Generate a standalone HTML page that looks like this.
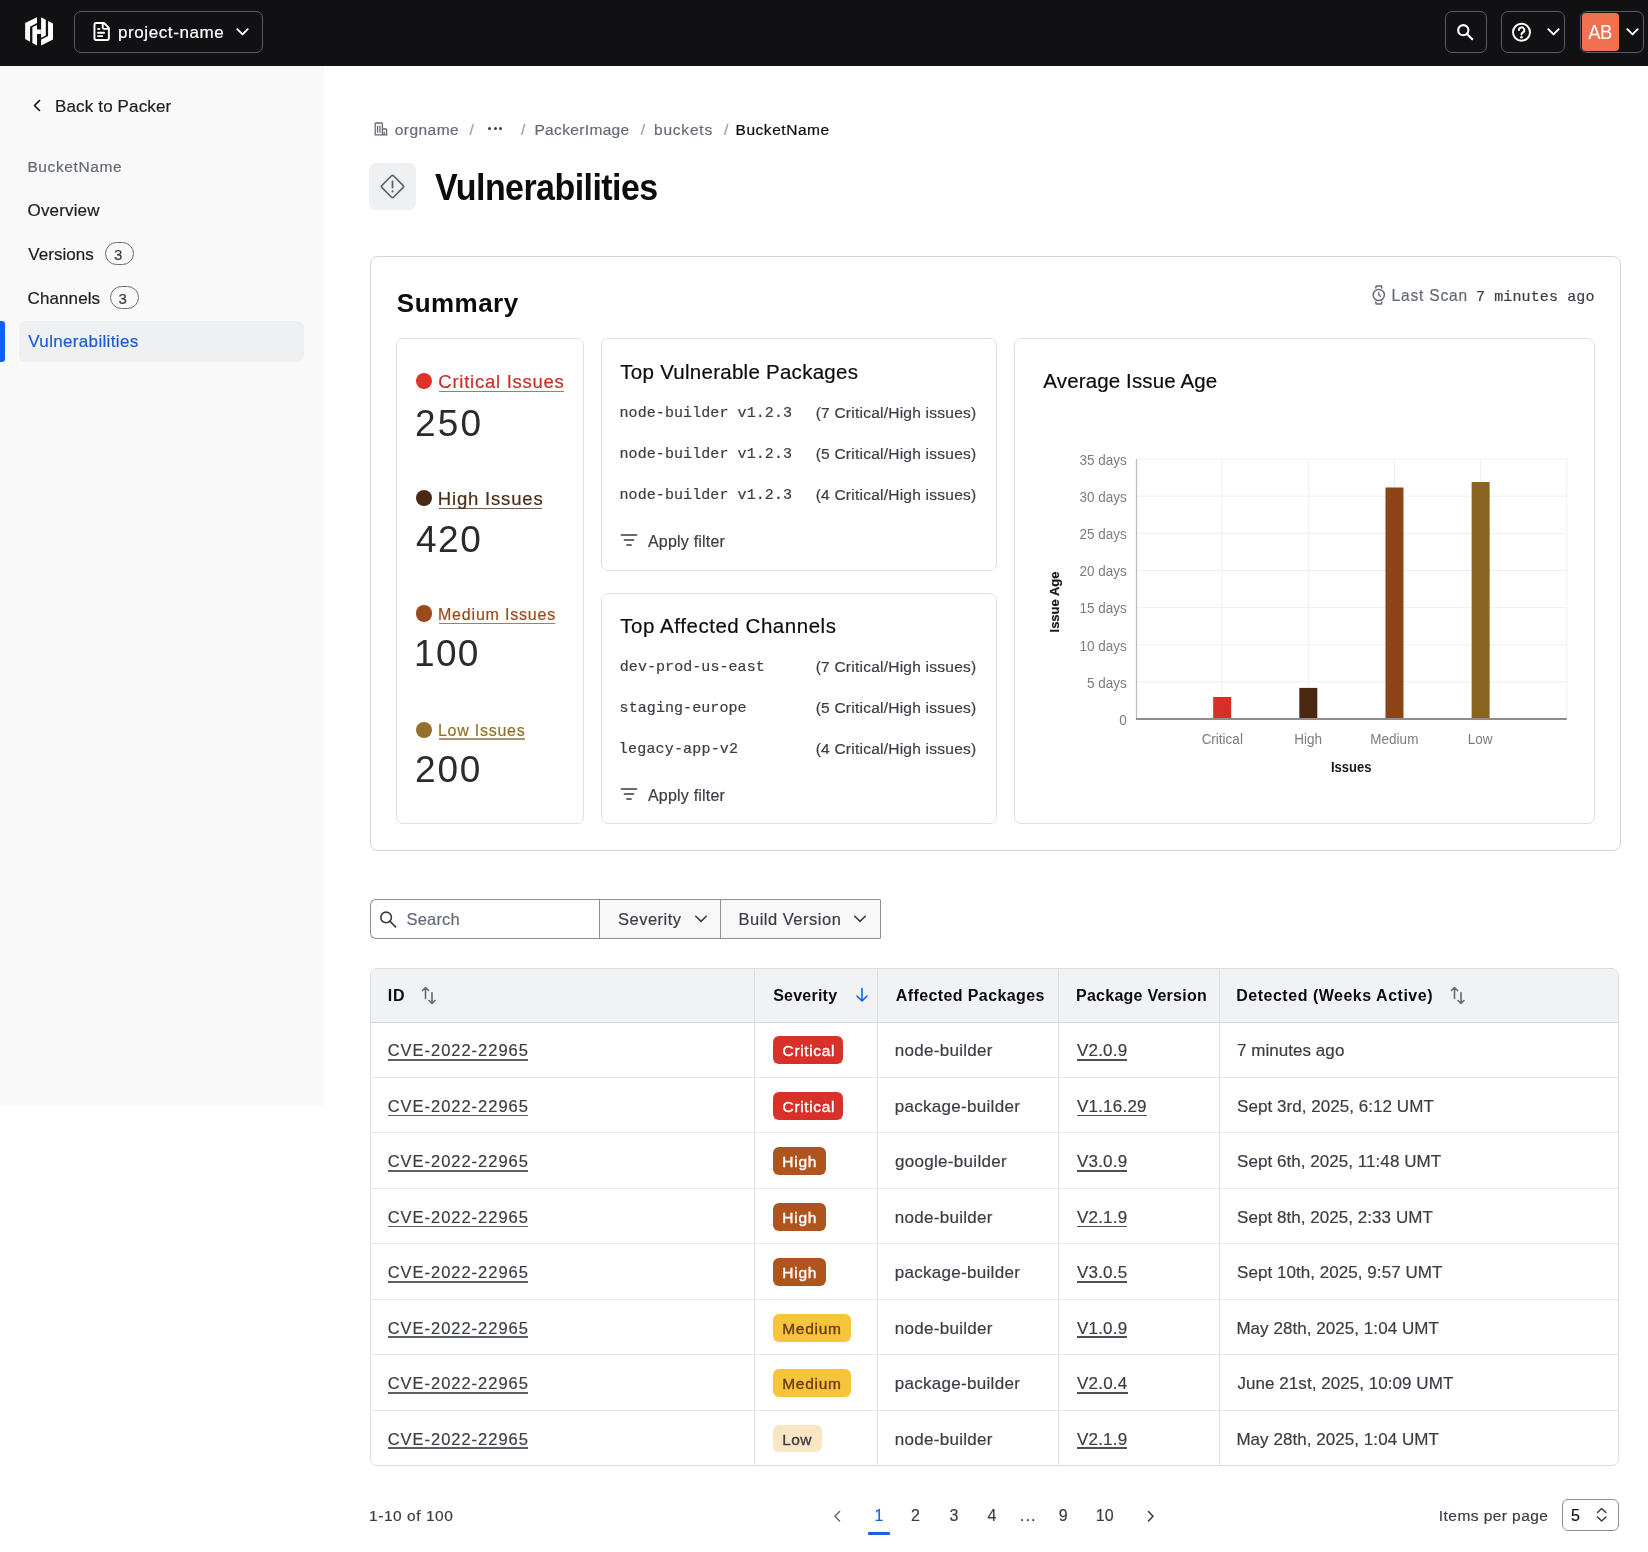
<!DOCTYPE html>
<html><head><meta charset="utf-8"><title>Vulnerabilities</title>
<style>
html,body{margin:0;padding:0;background:#fff;}
body{width:1648px;height:1552px;position:relative;overflow:hidden;font-family:"Liberation Sans",sans-serif;}
.t{position:absolute;line-height:1;white-space:nowrap;-webkit-text-stroke:0.2px currentColor;}
.r{position:absolute;display:block;}
#w{position:absolute;left:0;top:0;width:1648px;height:1552px;will-change:transform;}
</style></head><body><div id="w">
<div class="r" style="left:0.00px;top:0.00px;width:1648.00px;height:65.50px;background:#111113;"></div>
<svg class="r" style="left:20.00px;top:12.00px;width:40.00px;height:40.00px;" viewBox="0 0 1552 1552" fill="none"><path fill="#fff" d="M200 430 660 200V430L390 570V1150L200 1050z"/><path fill="#fff" d="M480 590 660 500V680H810V850H660V1300L480 1200z"/><path fill="#fff" d="M820 200 1000 300V910L820 1000z"/><path fill="#fff" d="M1280 1070 820 1300V1070L1090 930V350L1280 450z"/></svg>
<div class="r" style="left:74.00px;top:11.00px;width:189.00px;height:41.50px;border:1.5px solid #595b62;border-radius:7px;box-sizing:border-box;"></div>
<svg class="r" style="left:88.00px;top:18.00px;width:26.00px;height:26.00px;" viewBox="0 0 1552 1552" fill="none"><path stroke="#fff" stroke-width="115" stroke-linejoin="round" d="M485 300H955L1245 590V1210Q1245 1310 1145 1310H485Q385 1310 385 1210V400Q385 300 485 300z"/><path stroke="#fff" stroke-width="115" stroke-linecap="round" stroke-linejoin="round" d="M880 330V560Q880 650 970 650H1220M600 650H680M600 880H960M600 1080H850"/></svg>
<div class="t" style="left:117.90px;top:24.00px;font-size:17px;color:#fff;letter-spacing:0.604px;">project-name</div>
<svg class="r" style="left:235.00px;top:26.00px;width:15.00px;height:11.00px;" viewBox="0 0 15 11" fill="none"><path stroke="#fff" stroke-width="1.9" stroke-linecap="round" stroke-linejoin="round" d="M2.3 3.2l5.2 5.2 5.2-5.2"/></svg>
<div class="r" style="left:1445.00px;top:11.00px;width:41.50px;height:41.50px;border:1.5px solid #595b62;border-radius:7px;box-sizing:border-box;"></div>
<svg class="r" style="left:1456.00px;top:23.00px;width:19.00px;height:18.00px;" viewBox="0 0 19 18" fill="none"><circle cx="7.3" cy="7.2" r="5.1" stroke="#fff" stroke-width="2.1"/><path stroke="#fff" stroke-width="2.1" stroke-linecap="round" d="M11 10.9l5.3 5.3"/></svg>
<div class="r" style="left:1500.50px;top:11.00px;width:64.50px;height:41.50px;border:1.5px solid #595b62;border-radius:7px;box-sizing:border-box;"></div>
<svg class="r" style="left:1511.00px;top:21.50px;width:21.00px;height:20.50px;" viewBox="0 0 21 20.5" fill="none"><circle cx="10.5" cy="10.25" r="8.5" stroke="#fff" stroke-width="1.9"/><path stroke="#fff" stroke-width="2" stroke-linecap="round" d="M7.9 8.1a2.7 2.7 0 1 1 3.9 2.4c-.8.4-1.3 1-1.3 1.8v.3"/><circle cx="10.5" cy="15.2" r="1.25" fill="#fff"/></svg>
<svg class="r" style="left:1546.00px;top:26.00px;width:15.00px;height:11.00px;" viewBox="0 0 15 11" fill="none"><path stroke="#fff" stroke-width="1.9" stroke-linecap="round" stroke-linejoin="round" d="M2.3 3.2l5.2 5.2 5.2-5.2"/></svg>
<div class="r" style="left:1579.50px;top:11.00px;width:64.50px;height:41.50px;border:1.5px solid #595b62;border-radius:7px;box-sizing:border-box;"></div>
<div class="r" style="left:1581.50px;top:13.00px;width:37.00px;height:37.50px;background:#f0714f;border-radius:4px;"></div>
<div class="t" style="left:1588.36px;top:24.00px;font-size:18.5px;color:#fff;letter-spacing:-0.667px;transform-origin:0 15.00px;transform:scaleY(1.100);-webkit-text-stroke:0;">AB</div>
<svg class="r" style="left:1625.00px;top:26.00px;width:15.00px;height:11.00px;" viewBox="0 0 15 11" fill="none"><path stroke="#fff" stroke-width="1.9" stroke-linecap="round" stroke-linejoin="round" d="M2.3 3.2l5.2 5.2 5.2-5.2"/></svg>
<div class="r" style="left:0.00px;top:65.50px;width:323.50px;height:1039.80px;background:#f9f9fa;"></div>
<svg class="r" style="left:32.00px;top:99.00px;width:10.00px;height:13.00px;" viewBox="0 0 10 13" fill="none"><path stroke="#0c0c0e" stroke-width="1.6" stroke-linecap="round" stroke-linejoin="round" d="M7.5 1.5 2.5 6.5l5 5"/></svg>
<div class="t" style="left:55.01px;top:98.30px;font-size:17px;color:#1d1e22;letter-spacing:0.150px;">Back to Packer</div>
<div class="t" style="left:27.43px;top:158.80px;font-size:15.5px;color:#656a76;letter-spacing:0.614px;">BucketName</div>
<div class="t" style="left:27.59px;top:202.00px;font-size:17px;color:#1d1e22;letter-spacing:0.145px;">Overview</div>
<div class="t" style="left:28.33px;top:246.10px;font-size:17px;color:#1d1e22;letter-spacing:0.035px;">Versions</div>
<div class="r" style="left:105.10px;top:242.00px;width:28.70px;height:22.70px;border:1px solid #6b6e76;border-radius:12px;box-sizing:border-box;"></div>
<div class="t c3" style="left:113.93px;top:247.10px;font-size:15px;color:#3b3d45;">3</div>
<div class="t" style="left:27.54px;top:289.60px;font-size:17px;color:#1d1e22;letter-spacing:0.107px;">Channels</div>
<div class="r" style="left:109.70px;top:286.00px;width:28.90px;height:22.60px;border:1px solid #6b6e76;border-radius:12px;box-sizing:border-box;"></div>
<div class="t c3" style="left:118.53px;top:290.60px;font-size:15px;color:#3b3d45;">3</div>
<div class="r" style="left:19.00px;top:320.80px;width:285.00px;height:41.00px;background:#eff0f2;border-radius:6px;"></div>
<div class="r" style="left:0.00px;top:320.60px;width:4.70px;height:41.40px;background:#1060ff;border-radius:0 3px 3px 0;"></div>
<div class="t" style="left:28.33px;top:333.30px;font-size:17px;color:#1b5cd6;letter-spacing:0.332px;">Vulnerabilities</div>
<svg class="r" style="left:374.00px;top:122.00px;width:14.00px;height:13.50px;" viewBox="0 0 14 13.5" fill="none"><path stroke="#656a76" stroke-width="1.3" stroke-linejoin="round" d="M1.2 12.8V1.8a.8.8 0 0 1 .8-.8h5.6a.8.8 0 0 1 .8.8v11M8.4 7h3.4a.8.8 0 0 1 .8.8v5M.5 12.8h13M3.6 3.8v7M6 3.8v7M10.2 9.5v3"/></svg>
<div class="t" style="left:394.75px;top:121.90px;font-size:15.5px;color:#656a76;letter-spacing:0.461px;">orgname</div>
<div class="t" style="left:469.50px;top:121.90px;font-size:15.5px;color:#9a9ea8;">/</div>
<div class="t" style="left:521.00px;top:121.90px;font-size:15.5px;color:#9a9ea8;">/</div>
<div class="r" style="left:488.30px;top:126.90px;width:3.20px;height:3.20px;background:#3b3d45;border-radius:50%;"></div>
<div class="r" style="left:493.60px;top:126.90px;width:3.20px;height:3.20px;background:#3b3d45;border-radius:50%;"></div>
<div class="r" style="left:498.90px;top:126.90px;width:3.20px;height:3.20px;background:#3b3d45;border-radius:50%;"></div>
<div class="t" style="left:534.43px;top:121.90px;font-size:15.5px;color:#656a76;letter-spacing:0.344px;">PackerImage</div>
<div class="t" style="left:640.80px;top:121.90px;font-size:15.5px;color:#9a9ea8;">/</div>
<div class="t" style="left:654.00px;top:121.90px;font-size:15.5px;color:#656a76;letter-spacing:0.790px;">buckets</div>
<div class="t" style="left:724.00px;top:121.90px;font-size:15.5px;color:#9a9ea8;">/</div>
<div class="t" style="left:735.53px;top:121.90px;font-size:15.5px;color:#0c0c0e;letter-spacing:0.548px;">BucketName</div>
<div class="r" style="left:369.40px;top:163.30px;width:46.60px;height:46.30px;background:#eff0f2;border-radius:7px;"></div>
<svg class="r" style="left:379.00px;top:172.50px;width:27.00px;height:27.00px;" viewBox="0 0 27 27" fill="none"><path stroke="#5f636b" stroke-width="1.7" stroke-linejoin="round" d="M12.3 3 Q13.5 1.8 14.7 3L24 12.3Q25.2 13.5 24 14.7L14.7 24Q13.5 25.2 12.3 24L3 14.7Q1.8 13.5 3 12.3z"/><path stroke="#5f636b" stroke-width="1.8" stroke-linecap="round" d="M13.5 8.5v6"/><circle cx="13.5" cy="18.4" r="1.1" fill="#5f636b"/></svg>
<div class="t" style="left:434.97px;top:170.80px;font-size:34px;color:#0c0c0e;font-weight:700;-webkit-text-stroke:0;letter-spacing:-0.570px;transform-origin:0 29.00px;transform:scaleY(1.070);">Vulnerabilities</div>
<div class="r" style="left:369.90px;top:256.10px;width:1251.10px;height:595.10px;border:1px solid #d3d4d8;border-radius:8px;box-sizing:border-box;"></div>
<div class="t" style="left:396.85px;top:289.80px;font-size:26px;color:#0c0c0e;font-weight:700;-webkit-text-stroke:0;letter-spacing:0.465px;">Summary</div>
<svg class="r" style="left:1370.50px;top:285.00px;width:15.50px;height:20.00px;" viewBox="0 0 15.5 20" fill="none"><path stroke="#656a76" stroke-width="1.5" d="M4.5 3.4 5.3 1h5l.8 2.4M4.5 16.6l.8 2.4h5l.8-2.4"/><circle cx="7.8" cy="10" r="5.6" stroke="#656a76" stroke-width="1.5"/><path stroke="#656a76" stroke-width="1.4" stroke-linecap="round" d="M7.8 7.4V10l1.6 1.3"/></svg>
<div class="t" style="left:1391.53px;top:288.40px;font-size:15.5px;color:#656a76;letter-spacing:0.843px;transform-origin:0 13.00px;transform:scaleY(1.120);">Last Scan</div>
<div class="t" style="left:1475.94px;top:289.80px;font-size:15px;color:#3b3d45;font-family:'Liberation Mono', monospace;letter-spacing:0.125px;">7 minutes ago</div>
<div class="r" style="left:396.40px;top:338.10px;width:187.40px;height:486.40px;border:1px solid #dedfe2;border-radius:7px;box-sizing:border-box;"></div>
<div class="r" style="left:415.50px;top:373.20px;width:16.20px;height:16.20px;background:#e0312a;border-radius:50%;"></div>
<div class="t" style="left:438.36px;top:373.20px;font-size:18.5px;color:#c9302a;letter-spacing:0.734px;">Critical Issues</div>
<div class="r" style="left:439.30px;top:390.80px;width:124.30px;height:1.40px;background:#c9302a;opacity:.75;"></div>
<div class="t" style="left:414.94px;top:405.30px;font-size:37px;color:#2b2b2b;letter-spacing:2.237px;-webkit-text-stroke:0;">250</div>
<div class="r" style="left:415.50px;top:489.90px;width:16.20px;height:16.20px;background:#4a2812;border-radius:50%;"></div>
<div class="t" style="left:437.78px;top:489.90px;font-size:18.5px;color:#4d2c18;letter-spacing:0.823px;">High Issues</div>
<div class="r" style="left:439.30px;top:507.50px;width:103.20px;height:1.40px;background:#4d2c18;opacity:.75;"></div>
<div class="t" style="left:415.95px;top:521.30px;font-size:37px;color:#2b2b2b;letter-spacing:1.531px;-webkit-text-stroke:0;">420</div>
<div class="r" style="left:415.50px;top:605.40px;width:16.20px;height:16.20px;background:#9a4a1c;border-radius:50%;"></div>
<div class="t" style="left:437.99px;top:607.20px;font-size:16px;color:#9a4a1c;letter-spacing:0.808px;">Medium Issues</div>
<div class="r" style="left:439.30px;top:622.80px;width:115.90px;height:1.40px;background:#9a4a1c;opacity:.75;"></div>
<div class="t" style="left:413.98px;top:634.80px;font-size:37px;color:#2b2b2b;letter-spacing:1.365px;-webkit-text-stroke:0;">100</div>
<div class="r" style="left:415.50px;top:721.90px;width:16.20px;height:16.20px;background:#94702a;border-radius:50%;"></div>
<div class="t" style="left:437.99px;top:722.80px;font-size:16px;color:#94702a;letter-spacing:0.739px;">Low Issues</div>
<div class="r" style="left:439.30px;top:738.40px;width:85.30px;height:1.40px;background:#94702a;opacity:.75;"></div>
<div class="t" style="left:414.94px;top:750.80px;font-size:37px;color:#2b2b2b;letter-spacing:1.887px;-webkit-text-stroke:0;">200</div>
<div class="r" style="left:600.50px;top:338.00px;width:396.50px;height:233.00px;border:1px solid #dedfe2;border-radius:7px;box-sizing:border-box;"></div>
<div class="t" style="left:620.34px;top:361.60px;font-size:20.5px;color:#0c0c0e;letter-spacing:0.266px;">Top Vulnerable Packages</div>
<div class="t" style="left:619.49px;top:406.00px;font-size:15px;color:#3b3d45;font-family:'Liberation Mono', monospace;letter-spacing:0.085px;">node-builder v1.2.3</div>
<div class="t" style="left:815.64px;top:405.20px;font-size:15.5px;color:#3b3d45;letter-spacing:0.238px;">(7 Critical/High issues)</div>
<div class="t" style="left:619.49px;top:447.20px;font-size:15px;color:#3b3d45;font-family:'Liberation Mono', monospace;letter-spacing:0.085px;">node-builder v1.2.3</div>
<div class="t" style="left:815.64px;top:446.40px;font-size:15.5px;color:#3b3d45;letter-spacing:0.238px;">(5 Critical/High issues)</div>
<div class="t" style="left:619.49px;top:488.00px;font-size:15px;color:#3b3d45;font-family:'Liberation Mono', monospace;letter-spacing:0.085px;">node-builder v1.2.3</div>
<div class="t" style="left:815.64px;top:487.20px;font-size:15.5px;color:#3b3d45;letter-spacing:0.238px;">(4 Critical/High issues)</div>
<svg class="r" style="left:620.00px;top:532.50px;width:18.00px;height:14.00px;" viewBox="0 0 18 14" fill="none"><path stroke="#3b3d45" stroke-width="1.7" stroke-linecap="round" d="M1.5 2h15M4.5 7h9M7 12h4"/></svg>
<div class="t" style="left:647.97px;top:534.20px;font-size:16px;color:#3b3d45;letter-spacing:0.200px;">Apply filter</div>
<div class="r" style="left:600.50px;top:592.60px;width:396.50px;height:231.90px;border:1px solid #dedfe2;border-radius:7px;box-sizing:border-box;"></div>
<div class="t" style="left:620.34px;top:615.60px;font-size:20.5px;color:#0c0c0e;letter-spacing:0.543px;">Top Affected Channels</div>
<div class="t" style="left:619.79px;top:660.00px;font-size:15px;color:#3b3d45;font-family:'Liberation Mono', monospace;letter-spacing:0.063px;">dev-prod-us-east</div>
<div class="t" style="left:815.64px;top:659.20px;font-size:15.5px;color:#3b3d45;letter-spacing:0.238px;">(7 Critical/High issues)</div>
<div class="t" style="left:619.58px;top:701.20px;font-size:15px;color:#3b3d45;font-family:'Liberation Mono', monospace;letter-spacing:0.076px;">staging-europe</div>
<div class="t" style="left:815.64px;top:700.40px;font-size:15.5px;color:#3b3d45;letter-spacing:0.238px;">(5 Critical/High issues)</div>
<div class="t" style="left:618.84px;top:742.00px;font-size:15px;color:#3b3d45;font-family:'Liberation Mono', monospace;letter-spacing:0.183px;">legacy-app-v2</div>
<div class="t" style="left:815.64px;top:741.20px;font-size:15.5px;color:#3b3d45;letter-spacing:0.238px;">(4 Critical/High issues)</div>
<svg class="r" style="left:620.00px;top:786.50px;width:18.00px;height:14.00px;" viewBox="0 0 18 14" fill="none"><path stroke="#3b3d45" stroke-width="1.7" stroke-linecap="round" d="M1.5 2h15M4.5 7h9M7 12h4"/></svg>
<div class="t" style="left:647.97px;top:788.20px;font-size:16px;color:#3b3d45;letter-spacing:0.200px;">Apply filter</div>
<div class="r" style="left:1014.20px;top:338.20px;width:580.60px;height:486.00px;border:1px solid #dedfe2;border-radius:7px;box-sizing:border-box;"></div>
<div class="t" style="left:1043.36px;top:370.80px;font-size:20.5px;color:#0c0c0e;letter-spacing:0.133px;">Average Issue Age</div>
<svg class="r" style="left:1136.00px;top:459.20px;width:430.80px;height:261.10px;overflow:visible" viewBox="0 0 430.80 261.10"><line x1="0" x2="430.80" y1="260.10" y2="260.10" stroke="#efefef" stroke-width="1"/><line x1="0" x2="430.80" y1="222.94" y2="222.94" stroke="#efefef" stroke-width="1"/><line x1="0" x2="430.80" y1="185.79" y2="185.79" stroke="#efefef" stroke-width="1"/><line x1="0" x2="430.80" y1="148.63" y2="148.63" stroke="#efefef" stroke-width="1"/><line x1="0" x2="430.80" y1="111.47" y2="111.47" stroke="#efefef" stroke-width="1"/><line x1="0" x2="430.80" y1="74.31" y2="74.31" stroke="#efefef" stroke-width="1"/><line x1="0" x2="430.80" y1="37.16" y2="37.16" stroke="#efefef" stroke-width="1"/><line x1="0" x2="430.80" y1="0.00" y2="0.00" stroke="#efefef" stroke-width="1"/><line y1="0" y2="260.10" x1="86.16" x2="86.16" stroke="#efefef" stroke-width="1"/><line y1="0" y2="260.10" x1="172.32" x2="172.32" stroke="#efefef" stroke-width="1"/><line y1="0" y2="260.10" x1="258.48" x2="258.48" stroke="#efefef" stroke-width="1"/><line y1="0" y2="260.10" x1="344.64" x2="344.64" stroke="#efefef" stroke-width="1"/><line y1="0" y2="260.10" x1="430.80" x2="430.80" stroke="#efefef" stroke-width="1"/><rect x="77.16" y="238.00" width="18" height="22.10" fill="#da2f29"/><rect x="163.32" y="228.90" width="18" height="31.20" fill="#4b2611"/><rect x="249.48" y="28.50" width="18" height="231.60" fill="#8c4418"/><rect x="335.64" y="23.00" width="18" height="237.10" fill="#8a6420"/><line x1="0.5" x2="0.5" y1="0" y2="260.10" stroke="#bdbdbd" stroke-width="1.3"/><line x1="0" x2="430.80" y1="260.10" y2="260.10" stroke="#8d8d8d" stroke-width="2"/></svg>
<div class="t" style="left:1119.32px;top:713.90px;font-size:13.5px;color:#7c7c7c;transform-origin:0 11.00px;transform:scaleY(1.100);-webkit-text-stroke:0;">0</div>
<div class="t" style="left:1087.01px;top:676.74px;font-size:13.5px;color:#7c7c7c;transform-origin:0 11.00px;transform:scaleY(1.100);-webkit-text-stroke:0;">5 days</div>
<div class="t" style="left:1079.50px;top:639.59px;font-size:13.5px;color:#7c7c7c;transform-origin:0 11.00px;transform:scaleY(1.100);-webkit-text-stroke:0;">10 days</div>
<div class="t" style="left:1079.50px;top:602.43px;font-size:13.5px;color:#7c7c7c;transform-origin:0 11.00px;transform:scaleY(1.100);-webkit-text-stroke:0;">15 days</div>
<div class="t" style="left:1079.50px;top:565.27px;font-size:13.5px;color:#7c7c7c;transform-origin:0 11.00px;transform:scaleY(1.100);-webkit-text-stroke:0;">20 days</div>
<div class="t" style="left:1079.50px;top:528.11px;font-size:13.5px;color:#7c7c7c;transform-origin:0 11.00px;transform:scaleY(1.100);-webkit-text-stroke:0;">25 days</div>
<div class="t" style="left:1079.50px;top:490.96px;font-size:13.5px;color:#7c7c7c;transform-origin:0 11.00px;transform:scaleY(1.100);-webkit-text-stroke:0;">30 days</div>
<div class="t" style="left:1079.50px;top:453.80px;font-size:13.5px;color:#7c7c7c;transform-origin:0 11.00px;transform:scaleY(1.100);-webkit-text-stroke:0;">35 days</div>
<div class="t" style="left:1201.64px;top:733.00px;font-size:13.5px;color:#7c7c7c;transform-origin:0 11.00px;transform:scaleY(1.100);-webkit-text-stroke:0;">Critical</div>
<div class="t" style="left:1294.32px;top:733.00px;font-size:13.5px;color:#7c7c7c;transform-origin:0 11.00px;transform:scaleY(1.100);-webkit-text-stroke:0;">High</div>
<div class="t" style="left:1370.36px;top:733.00px;font-size:13.5px;color:#7c7c7c;transform-origin:0 11.00px;transform:scaleY(1.100);-webkit-text-stroke:0;">Medium</div>
<div class="t" style="left:1467.69px;top:733.00px;font-size:13.5px;color:#7c7c7c;transform-origin:0 11.00px;transform:scaleY(1.100);-webkit-text-stroke:0;">Low</div>
<div class="t" style="left:1330.90px;top:761.20px;font-size:13px;color:#161616;font-weight:700;-webkit-text-stroke:0;transform-origin:0 11.00px;transform:scaleY(1.100);">Issues</div>
<div class="t" style="left:1053.6px;top:602.4px;font-size:13px;font-weight:700;color:#161616;transform:translate(-50%,-50%) rotate(-90deg);">Issue Age</div>
<div class="r" style="left:369.80px;top:898.50px;width:230.20px;height:40.80px;border:1px solid #8c8f98;border-right:none;border-radius:6px 0 0 6px;box-sizing:border-box;background:#fff;"></div>
<svg class="r" style="left:378.50px;top:910.50px;width:19.00px;height:17.50px;" viewBox="0 0 19 17.5" fill="none"><circle cx="7.1" cy="6.4" r="5.3" stroke="#3b3d45" stroke-width="1.6"/><path stroke="#3b3d45" stroke-width="1.7" stroke-linecap="round" d="M11 10.3l5.6 5.6"/></svg>
<div class="t" style="left:406.55px;top:911.00px;font-size:16.5px;color:#656a76;letter-spacing:0.168px;">Search</div>
<div class="r" style="left:599.30px;top:898.50px;width:121.70px;height:40.80px;border:1px solid #8c8f98;box-sizing:border-box;background:#f8f8f9;"></div>
<div class="t" style="left:618.05px;top:910.70px;font-size:16.5px;color:#3b3d45;letter-spacing:0.483px;">Severity</div>
<svg class="r" style="left:693.50px;top:913.00px;width:14.00px;height:12.00px;" viewBox="0 0 14 12" fill="none"><path stroke="#3b3d45" stroke-width="1.6" stroke-linecap="round" stroke-linejoin="round" d="M1.8 3.2 7 8.4l5.2-5.2"/></svg>
<div class="r" style="left:720.00px;top:898.50px;width:160.60px;height:40.80px;border:1px solid #8c8f98;box-sizing:border-box;background:#f8f8f9;border-radius:0 1px 1px 0;"></div>
<div class="t" style="left:738.45px;top:910.70px;font-size:16.5px;color:#3b3d45;letter-spacing:0.509px;">Build Version</div>
<svg class="r" style="left:853.00px;top:913.00px;width:14.00px;height:12.00px;" viewBox="0 0 14 12" fill="none"><path stroke="#3b3d45" stroke-width="1.6" stroke-linecap="round" stroke-linejoin="round" d="M1.8 3.2 7 8.4l5.2-5.2"/></svg>
<div class="r" style="left:369.80px;top:967.70px;width:1249.20px;height:498.60px;border:1px solid #dcdde0;border-radius:7px;box-sizing:border-box;overflow:hidden;"></div>
<div class="r" style="left:370.80px;top:968.70px;width:1247.20px;height:53.00px;background:#f1f2f3;border-radius:6px 6px 0 0;"></div>
<div class="r" style="left:369.80px;top:1021.70px;width:1249.20px;height:1.20px;background:#d5d6da;"></div>
<div class="r" style="left:369.80px;top:1076.90px;width:1249.20px;height:1.00px;background:#e6e7ea;"></div>
<div class="r" style="left:369.80px;top:1132.40px;width:1249.20px;height:1.00px;background:#e6e7ea;"></div>
<div class="r" style="left:369.80px;top:1187.90px;width:1249.20px;height:1.00px;background:#e6e7ea;"></div>
<div class="r" style="left:369.80px;top:1243.30px;width:1249.20px;height:1.00px;background:#e6e7ea;"></div>
<div class="r" style="left:369.80px;top:1298.80px;width:1249.20px;height:1.00px;background:#e6e7ea;"></div>
<div class="r" style="left:369.80px;top:1354.30px;width:1249.20px;height:1.00px;background:#e6e7ea;"></div>
<div class="r" style="left:369.80px;top:1409.80px;width:1249.20px;height:1.00px;background:#e6e7ea;"></div>
<div class="r" style="left:754.40px;top:968.20px;width:1.10px;height:497.30px;background:#dfe0e3;"></div>
<div class="r" style="left:877.10px;top:968.20px;width:1.10px;height:497.30px;background:#dfe0e3;"></div>
<div class="r" style="left:1057.80px;top:968.20px;width:1.10px;height:497.30px;background:#dfe0e3;"></div>
<div class="r" style="left:1218.50px;top:968.20px;width:1.10px;height:497.30px;background:#dfe0e3;"></div>
<div class="t" style="left:387.73px;top:988.30px;font-size:16px;color:#0c0c0e;font-weight:700;-webkit-text-stroke:0;letter-spacing:0.942px;">ID</div>
<svg class="r" style="left:420.00px;top:985.50px;width:17.00px;height:19.00px;" viewBox="0 0 15 19" fill="none"><path stroke="#656a76" stroke-width="1.6" stroke-linecap="round" stroke-linejoin="round" d="M4.5 12.5V1.5M1.5 4.5l3-3 3 3M11 6.5v11M8 14.5l3 3 3-3"/></svg>
<div class="t" style="left:773.14px;top:988.30px;font-size:16px;color:#0c0c0e;font-weight:700;-webkit-text-stroke:0;letter-spacing:0.240px;">Severity</div>
<svg class="r" style="left:854.50px;top:987.00px;width:14.00px;height:16.00px;" viewBox="0 0 14 16" fill="none"><path stroke="#1060ff" stroke-width="1.6" stroke-linecap="round" stroke-linejoin="round" d="M7 1.5v12.5M2 9l5 5 5-5"/></svg>
<div class="t" style="left:895.80px;top:988.30px;font-size:16px;color:#0c0c0e;font-weight:700;-webkit-text-stroke:0;letter-spacing:0.392px;">Affected Packages</div>
<div class="t" style="left:1076.03px;top:988.30px;font-size:16px;color:#0c0c0e;font-weight:700;-webkit-text-stroke:0;letter-spacing:0.249px;">Package Version</div>
<div class="t" style="left:1236.23px;top:988.30px;font-size:16px;color:#0c0c0e;font-weight:700;-webkit-text-stroke:0;letter-spacing:0.515px;">Detected (Weeks Active)</div>
<svg class="r" style="left:1449.00px;top:985.50px;width:17.00px;height:19.00px;" viewBox="0 0 15 19" fill="none"><path stroke="#656a76" stroke-width="1.6" stroke-linecap="round" stroke-linejoin="round" d="M4.5 12.5V1.5M1.5 4.5l3-3 3 3M11 6.5v11M8 14.5l3 3 3-3"/></svg>
<div class="t" style="left:387.66px;top:1042.35px;font-size:16.5px;color:#3b3d45;letter-spacing:0.979px;">CVE-2022-22965</div>
<div class="r" style="left:388.30px;top:1058.95px;width:139.30px;height:1.60px;background:#5d6068;"></div>
<div class="r" style="left:773.20px;top:1036.35px;width:70.00px;height:27.70px;background:#d8312a;border-radius:6px;"></div>
<div class="t" style="left:782.61px;top:1043.35px;font-size:15.5px;color:#fff;letter-spacing:0.630px;-webkit-text-stroke:0.35px #fff;">Critical</div>
<div class="t" style="left:894.67px;top:1042.35px;font-size:17px;color:#3b3d45;letter-spacing:0.299px;">node-builder</div>
<div class="t" style="left:1076.93px;top:1042.35px;font-size:17px;color:#3b3d45;letter-spacing:0.227px;">V2.0.9</div>
<div class="r" style="left:1077.00px;top:1058.95px;width:50.20px;height:1.60px;background:#4d5058;"></div>
<div class="t" style="left:1236.93px;top:1042.35px;font-size:17px;color:#3b3d45;letter-spacing:0.052px;">7 minutes ago</div>
<div class="t" style="left:387.66px;top:1097.95px;font-size:16.5px;color:#3b3d45;letter-spacing:0.979px;">CVE-2022-22965</div>
<div class="r" style="left:388.30px;top:1114.55px;width:139.30px;height:1.60px;background:#5d6068;"></div>
<div class="r" style="left:773.20px;top:1091.95px;width:70.00px;height:27.70px;background:#d8312a;border-radius:6px;"></div>
<div class="t" style="left:782.61px;top:1098.95px;font-size:15.5px;color:#fff;letter-spacing:0.630px;-webkit-text-stroke:0.35px #fff;">Critical</div>
<div class="t" style="left:894.70px;top:1097.95px;font-size:17px;color:#3b3d45;letter-spacing:0.301px;">package-builder</div>
<div class="t" style="left:1076.93px;top:1097.95px;font-size:17px;color:#3b3d45;letter-spacing:0.226px;">V1.16.29</div>
<div class="r" style="left:1077.00px;top:1114.55px;width:69.56px;height:1.60px;background:#4d5058;"></div>
<div class="t" style="left:1237.03px;top:1097.95px;font-size:17px;color:#3b3d45;letter-spacing:0.050px;">Sept 3rd, 2025, 6:12 UMT</div>
<div class="t" style="left:387.66px;top:1153.45px;font-size:16.5px;color:#3b3d45;letter-spacing:0.979px;">CVE-2022-22965</div>
<div class="r" style="left:388.30px;top:1170.05px;width:139.30px;height:1.60px;background:#5d6068;"></div>
<div class="r" style="left:773.20px;top:1147.45px;width:53.30px;height:27.70px;background:#b0541d;border-radius:6px;"></div>
<div class="t" style="left:782.13px;top:1154.45px;font-size:15.5px;color:#fff;letter-spacing:0.828px;-webkit-text-stroke:0.35px #fff;">High</div>
<div class="t" style="left:895.09px;top:1153.45px;font-size:17px;color:#3b3d45;letter-spacing:0.290px;">google-builder</div>
<div class="t" style="left:1076.93px;top:1153.45px;font-size:17px;color:#3b3d45;letter-spacing:0.227px;">V3.0.9</div>
<div class="r" style="left:1077.00px;top:1170.05px;width:50.20px;height:1.60px;background:#4d5058;"></div>
<div class="t" style="left:1237.03px;top:1153.45px;font-size:17px;color:#3b3d45;letter-spacing:0.050px;">Sept 6th, 2025, 11:48 UMT</div>
<div class="t" style="left:387.66px;top:1208.90px;font-size:16.5px;color:#3b3d45;letter-spacing:0.979px;">CVE-2022-22965</div>
<div class="r" style="left:388.30px;top:1225.50px;width:139.30px;height:1.60px;background:#5d6068;"></div>
<div class="r" style="left:773.20px;top:1202.90px;width:53.30px;height:27.70px;background:#b0541d;border-radius:6px;"></div>
<div class="t" style="left:782.13px;top:1209.90px;font-size:15.5px;color:#fff;letter-spacing:0.828px;-webkit-text-stroke:0.35px #fff;">High</div>
<div class="t" style="left:894.67px;top:1208.90px;font-size:17px;color:#3b3d45;letter-spacing:0.299px;">node-builder</div>
<div class="t" style="left:1076.93px;top:1208.90px;font-size:17px;color:#3b3d45;letter-spacing:0.227px;">V2.1.9</div>
<div class="r" style="left:1077.00px;top:1225.50px;width:50.20px;height:1.60px;background:#4d5058;"></div>
<div class="t" style="left:1237.03px;top:1208.90px;font-size:17px;color:#3b3d45;letter-spacing:0.049px;">Sept 8th, 2025, 2:33 UMT</div>
<div class="t" style="left:387.66px;top:1264.35px;font-size:16.5px;color:#3b3d45;letter-spacing:0.979px;">CVE-2022-22965</div>
<div class="r" style="left:388.30px;top:1280.95px;width:139.30px;height:1.60px;background:#5d6068;"></div>
<div class="r" style="left:773.20px;top:1258.35px;width:53.30px;height:27.70px;background:#b0541d;border-radius:6px;"></div>
<div class="t" style="left:782.13px;top:1265.35px;font-size:15.5px;color:#fff;letter-spacing:0.828px;-webkit-text-stroke:0.35px #fff;">High</div>
<div class="t" style="left:894.70px;top:1264.35px;font-size:17px;color:#3b3d45;letter-spacing:0.301px;">package-builder</div>
<div class="t" style="left:1076.93px;top:1264.35px;font-size:17px;color:#3b3d45;letter-spacing:0.228px;">V3.0.5</div>
<div class="r" style="left:1077.00px;top:1280.95px;width:50.30px;height:1.60px;background:#4d5058;"></div>
<div class="t" style="left:1237.03px;top:1264.35px;font-size:17px;color:#3b3d45;letter-spacing:0.050px;">Sept 10th, 2025, 9:57 UMT</div>
<div class="t" style="left:387.66px;top:1319.85px;font-size:16.5px;color:#3b3d45;letter-spacing:0.979px;">CVE-2022-22965</div>
<div class="r" style="left:388.30px;top:1336.45px;width:139.30px;height:1.60px;background:#5d6068;"></div>
<div class="r" style="left:773.20px;top:1313.85px;width:77.50px;height:27.70px;background:#f7c53b;border-radius:6px;"></div>
<div class="t" style="left:782.13px;top:1320.85px;font-size:15.5px;color:#6a3b0a;letter-spacing:0.750px;-webkit-text-stroke:0.35px #6a3b0a;">Medium</div>
<div class="t" style="left:894.67px;top:1319.85px;font-size:17px;color:#3b3d45;letter-spacing:0.299px;">node-builder</div>
<div class="t" style="left:1076.93px;top:1319.85px;font-size:17px;color:#3b3d45;letter-spacing:0.227px;">V1.0.9</div>
<div class="r" style="left:1077.00px;top:1336.45px;width:50.20px;height:1.60px;background:#4d5058;"></div>
<div class="t" style="left:1236.41px;top:1319.85px;font-size:17px;color:#3b3d45;letter-spacing:0.051px;">May 28th, 2025, 1:04 UMT</div>
<div class="t" style="left:387.66px;top:1375.35px;font-size:16.5px;color:#3b3d45;letter-spacing:0.979px;">CVE-2022-22965</div>
<div class="r" style="left:388.30px;top:1391.95px;width:139.30px;height:1.60px;background:#5d6068;"></div>
<div class="r" style="left:773.20px;top:1369.35px;width:77.50px;height:27.70px;background:#f7c53b;border-radius:6px;"></div>
<div class="t" style="left:782.13px;top:1376.35px;font-size:15.5px;color:#6a3b0a;letter-spacing:0.750px;-webkit-text-stroke:0.35px #6a3b0a;">Medium</div>
<div class="t" style="left:894.70px;top:1375.35px;font-size:17px;color:#3b3d45;letter-spacing:0.301px;">package-builder</div>
<div class="t" style="left:1076.93px;top:1375.35px;font-size:17px;color:#3b3d45;letter-spacing:0.229px;">V2.0.4</div>
<div class="r" style="left:1077.00px;top:1391.95px;width:50.52px;height:1.60px;background:#4d5058;"></div>
<div class="t" style="left:1237.53px;top:1375.35px;font-size:17px;color:#3b3d45;letter-spacing:0.050px;">June 21st, 2025, 10:09 UMT</div>
<div class="t" style="left:387.66px;top:1430.70px;font-size:16.5px;color:#3b3d45;letter-spacing:0.979px;">CVE-2022-22965</div>
<div class="r" style="left:388.30px;top:1447.30px;width:139.30px;height:1.60px;background:#5d6068;"></div>
<div class="r" style="left:773.20px;top:1424.70px;width:48.70px;height:27.70px;background:#fae6c2;border-radius:6px;"></div>
<div class="t" style="left:782.13px;top:1431.70px;font-size:15.5px;color:#3b3d45;letter-spacing:0.439px;-webkit-text-stroke:0.35px #3b3d45;">Low</div>
<div class="t" style="left:894.67px;top:1430.70px;font-size:17px;color:#3b3d45;letter-spacing:0.299px;">node-builder</div>
<div class="t" style="left:1076.93px;top:1430.70px;font-size:17px;color:#3b3d45;letter-spacing:0.227px;">V2.1.9</div>
<div class="r" style="left:1077.00px;top:1447.30px;width:50.20px;height:1.60px;background:#4d5058;"></div>
<div class="t" style="left:1236.41px;top:1430.70px;font-size:17px;color:#3b3d45;letter-spacing:0.051px;">May 28th, 2025, 1:04 UMT</div>
<div class="t" style="left:369.12px;top:1507.90px;font-size:15.5px;color:#3b3d45;letter-spacing:0.526px;">1-10 of 100</div>
<svg class="r" style="left:833.00px;top:1509.50px;width:9.00px;height:12.50px;" viewBox="0 0 9 12.5" fill="none"><path stroke="#656a76" stroke-width="1.5" stroke-linecap="round" stroke-linejoin="round" d="M6.5 1.5 2 6.3l4.5 4.7"/></svg>
<div class="t" style="left:874.38px;top:1507.90px;font-size:16px;color:#1c5fdc;">1</div>
<div class="r" style="left:868.40px;top:1532.20px;width:21.40px;height:3.00px;background:#1c5fdc;border-radius:1px;"></div>
<div class="t" style="left:910.90px;top:1507.90px;font-size:16px;color:#3b3d45;">2</div>
<div class="t" style="left:949.39px;top:1507.90px;font-size:16px;color:#3b3d45;">3</div>
<div class="t" style="left:987.43px;top:1507.90px;font-size:16px;color:#3b3d45;">4</div>
<div class="t" style="left:1058.75px;top:1507.90px;font-size:16px;color:#3b3d45;">9</div>
<div class="t" style="left:1095.78px;top:1507.90px;font-size:16px;color:#3b3d45;">10</div>
<div class="t" style="left:1019.84px;top:1507.90px;font-size:16px;color:#3b3d45;letter-spacing:1.143px;">...</div>
<svg class="r" style="left:1146.00px;top:1509.50px;width:9.00px;height:12.50px;" viewBox="0 0 9 12.5" fill="none"><path stroke="#3b3d45" stroke-width="1.6" stroke-linecap="round" stroke-linejoin="round" d="M2.5 1.5 7 6.3l-4.5 4.7"/></svg>
<div class="t" style="left:1438.87px;top:1508.20px;font-size:15.5px;color:#3b3d45;letter-spacing:0.433px;">Items per page</div>
<div class="r" style="left:1562.20px;top:1498.80px;width:56.60px;height:31.80px;border:1px solid #8c8f98;border-radius:6px;box-sizing:border-box;"></div>
<div class="t" style="left:1570.96px;top:1508.40px;font-size:16px;color:#0c0c0e;">5</div>
<svg class="r" style="left:1594.50px;top:1507.00px;width:13.50px;height:15.50px;" viewBox="0 0 13.5 15.5" fill="none"><path stroke="#3b3d45" stroke-width="1.5" stroke-linecap="round" stroke-linejoin="round" d="M2.5 5.5l4.2-4 4.2 4M2.5 10l4.2 4 4.2-4"/></svg>
</div></body></html>
